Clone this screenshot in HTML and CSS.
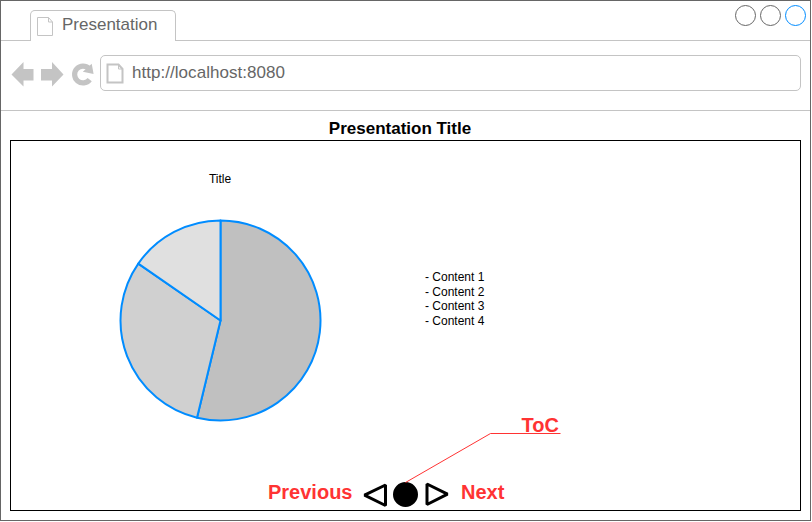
FILE: index.html
```html
<!DOCTYPE html>
<html lang="en">
<head>
<meta charset="utf-8">
<title>Presentation</title>
<link rel="stylesheet" href="styles.css">
</head>
<body>
<div class="window">
  <header class="tabbar">
    <div class="tab">
      <svg class="tab-icon" width="18" height="20" viewBox="0 0 18 20"><path d="M1.500 1.500H12.500L16.500 6V19.500H1.500ZM12.500 1.500V6H16.500" fill="none" stroke="#c4c4c4"/></svg>
      <span class="tab-label">Presentation</span>
    </div>
    <svg class="controls" width="74" height="24" viewBox="0 0 74 24" fill="none"><circle cx="11.500" cy="11.500" r="10" stroke="#666"/><circle cx="36.500" cy="11.500" r="10" stroke="#666"/><circle cx="61.500" cy="11.500" r="10" stroke="#008cff"/></svg>
  </header>
  <nav class="toolbar">
    <svg class="nav-icons" width="88" height="30" viewBox="0 0 88 30" fill="#c4c4c4">
      <path d="M0.500 14.500L12.500 2V9H22.500V20.500H12.500V26.500Z"/>
      <path d="M52.500 14.500L41 2V9H30V20.500H41V26.500Z"/>
      <path d="M78.700 19.600A8.400 8.400 0 1 1 78 8.600" fill="none" stroke="#c4c4c4" stroke-width="5.200"/>
      <path d="M80.700 3.700L82.600 14L71.800 11.800Z"/>
    </svg>
    <div class="address">
      <svg class="page-icon" width="18" height="21" viewBox="0 0 18 21"><path d="M1.500 1.500H12.500L16.500 6V19.500H1.500Z" fill="none" stroke="#c4c4c4" stroke-width="2"/><path d="M12.500 1.500V6H16.500" fill="none" stroke="#c4c4c4"/></svg>
      <span>http://localhost:8080</span>
    </div>
  </nav>
  <main class="page">
    <h1 class="title">Presentation Title</h1>
    <section class="slide">
      <div class="slide-body">
        <figure class="chart">
          <figcaption>Title</figcaption>
          <svg width="204" height="204" viewBox="-102.500 -102.500 204 204" stroke="#008cff" stroke-width="2" stroke-linejoin="round">
            <path d="M0 0V-100A100 100 0 1 1 -23.500 97.200Z" fill="#c0c0c0"/>
            <path d="M0 0L-23.500 97.200A100 100 0 0 1 -82.200 -56.900Z" fill="#d0d0d0"/>
            <path d="M0 0L-82.200 -56.900A100 100 0 0 1 0 -100Z" fill="#e0e0e0"/>
          </svg>
        </figure>
        <div class="content">
          <div>- Content 1</div>
          <div>- Content 2</div>
          <div>- Content 3</div>
          <div>- Content 4</div>
        </div>
      </div>
      <div class="pager">
        <span class="note previous">Previous</span>
        <svg class="pager-icons" width="90" height="30" viewBox="0 0 90 30" stroke="#000" stroke-width="3" stroke-linejoin="bevel">
          <path d="M25.500 5V25.500L4.500 15.200Z" fill="none"/>
          <circle cx="45.500" cy="14.500" r="11" />
          <path d="M67 4V24.500L87.500 14.200Z" fill="none"/>
        </svg>
        <span class="note">Next</span>
      </div>
      <div class="callout">
        <span class="note">ToC</span>
        <svg class="leader" width="160" height="52" viewBox="0 0 160 52"><path d="M5.500 49.500L90.500 .5H160.500" fill="none" stroke="#f33"/></svg>
      </div>
    </section>
  </main>
</div>
</body>
</html>
```
FILE: styles.css
```css
* { box-sizing: border-box; }

body {
  margin: 0;
  background: #fff;
  font-family: "Liberation Sans", Arial, sans-serif;
  overflow: hidden;
}

svg { display: block; flex: none; }

.window {
  width: 811px;
  height: 521px;
  border: 1px solid #666;
}

.tabbar {
  display: flex;
  justify-content: space-between;
  height: 40px;
  padding: 9px 2px 0 29px;
  border-bottom: 1px solid #c4c4c4;
}

.tab {
  display: flex;
  width: 146px;
  height: 31px;
  padding: 5px 0 0 5px;
  border: 1px solid #c4c4c4;
  border-bottom: 0;
  border-radius: 5px 5px 0 0;
  background: #fff;
}

.tab-label {
  margin: -1px 0 0 8px;
  color: #666;
  font-size: 17px;
  line-height: 20px;
}

.controls { margin-top: -6px; }

.toolbar {
  display: flex;
  height: 70px;
  padding: 14px 9px 0 10px;
  border-bottom: 1px solid #c4c4c4;
}

.nav-icons { margin-top: 5px; }

.address {
  display: flex;
  flex: 1;
  height: 36px;
  margin-left: 1px;
  padding: 7px 0 0 5px;
  border: 1px solid #c4c4c4;
  border-radius: 5px;
  color: #666;
  font-size: 17px;
  line-height: 20px;
}

.address span { margin-left: 8px; letter-spacing: 0.04px; }

.page { padding: 8px 9px 0; }

.title {
  margin: 0 0 1px;
  padding-right: 11px;
  font-size: 17px;
  line-height: 20px;
  text-align: center;
}

.slide {
  position: relative;
  height: 371px;
  border: 1px solid #000;
}

.slide-body {
  display: flex;
  height: 335px;
}

.chart {
  width: 204px;
  margin: 31px 0 0 107px;
  font-size: 12px;
  line-height: 14px;
  text-align: center;
}

.chart figcaption { margin-bottom: 32px; }

.content {
  margin: 129px 0 0 103px;
  font-size: 12px;
  line-height: 14.6px;
}

.pager {
  display: flex;
  padding-left: 257px;
}

.note {
  color: #f33;
  font-size: 20px;
  font-weight: bold;
  line-height: 24px;
}

.pager .note { margin-top: 4px; }
.previous { width: 85px; }
.pager-icons { margin: 4px 11px 0 7px; }

.callout {
  position: absolute;
  top: 272px;
  left: 389px;
  width: 160px;
}

.callout .note {
  display: block;
  height: 20px;
  padding-right: 1px;
  text-align: right;
}

.leader { overflow: visible; }
```
